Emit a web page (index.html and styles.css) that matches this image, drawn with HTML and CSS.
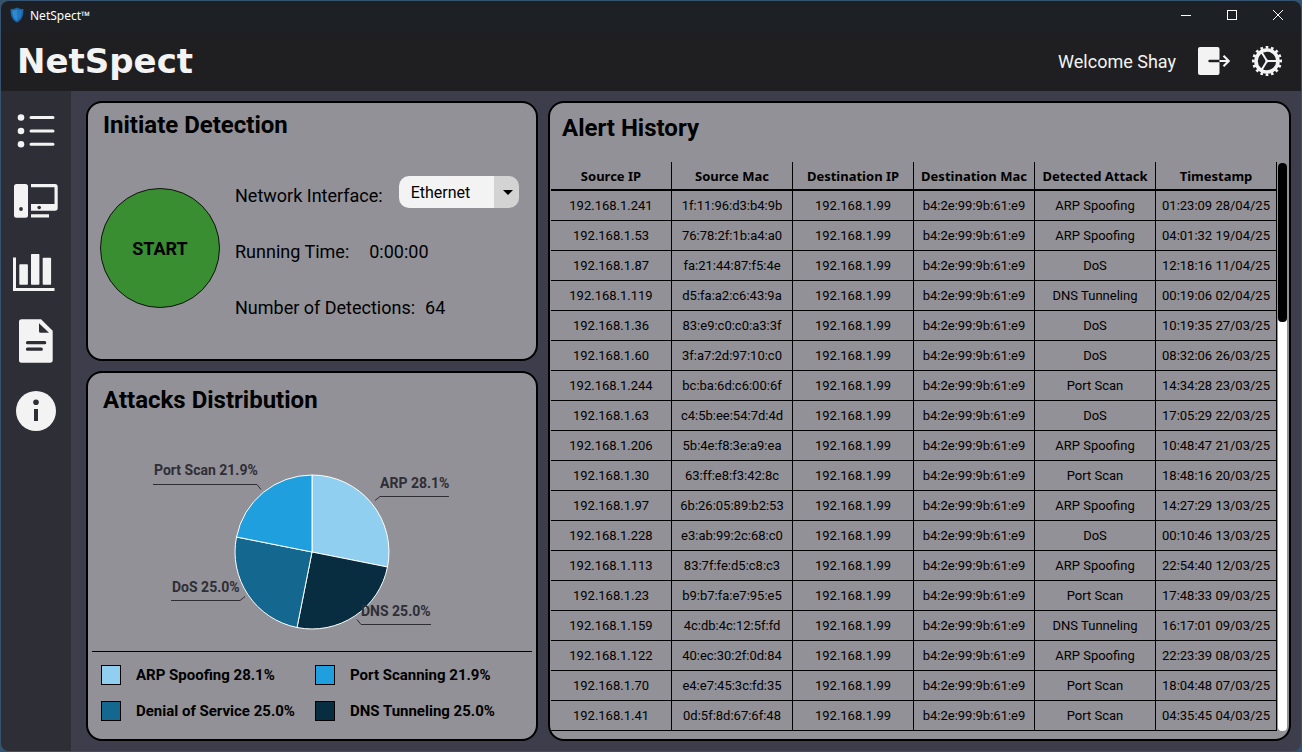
FILE: index.html
```html
<!DOCTYPE html>
<html lang="en">
<head>
<meta charset="utf-8">
<meta name="viewport" content="width=device-width, initial-scale=1">
<title>NetSpect™</title>
<link rel="stylesheet" href="styles.css">
</head>
<body>
<div class="window">
  <div class="titlebar">
    <svg class="titlebar-logo" viewBox="0 0 14 16" width="14" height="16" aria-hidden="true"><path d="M7 .5C5 1.6 3 2 .6 2c-.3 6 1.200 11 6.400 13.600C12.200 13 13.700 8 13.400 2 11 2 9 1.600 7 .5z" fill="#1766ad"/><path d="M7 2.400C5.400 3.200 3.900 3.500 2.200 3.600c0 4.400 1.200 8 4.800 10.200z" fill="#2f8ad0"/><path d="M7 2.400c1.600.8 3.100 1.100 4.800 1.200 0 4.400-1.200 8-4.800 10.200z" fill="#2478c0"/></svg>
    <span class="titlebar-name">NetSpect™</span>
    <div class="window-controls">
      <button class="window-button" aria-label="Minimize"><svg viewBox="0 0 10 10" width="10" height="10"><path d="M0 5.500h10" stroke="#fff"/></svg></button>
      <button class="window-button" aria-label="Maximize"><svg viewBox="0 0 10 10" width="10" height="10"><rect x=".5" y=".5" width="9" height="9" fill="none" stroke="#fff"/></svg></button>
      <button class="window-button" aria-label="Close"><svg viewBox="0 0 10 10" width="10" height="10"><path d="M0 0l10 10M10 0L0 10" stroke="#fff"/></svg></button>
    </div>
  </div>

  <header class="header">
    <h1 class="brand">NetSpect</h1>
    <div class="account">
      <span class="welcome">Welcome Shay</span>
      <button class="icon-button" aria-label="Log out">
        <svg viewBox="0 0 32 30" width="32" height="30"><rect x="0" y="1" width="21.500" height="28" rx="2" fill="#f3f3f3"/><path d="M11.500 15H22" stroke="#1f1f21" stroke-width="2.400" stroke-linecap="round"/><path d="M21.500 15H30M25.500 9.800l5.300 5.200-5.300 5.200" fill="none" stroke="#f3f3f3" stroke-width="2.200"/></svg>
      </button>
      <button class="icon-button" aria-label="Settings">
        <svg viewBox="0 0 30 30" width="30" height="30" fill="none" stroke="#f3f3f3"><circle cx="15" cy="15" r="11" stroke-width="3.600"/><circle cx="15" cy="15" r="13.600" stroke-width="2.800" pathLength="96" stroke-dasharray="3 3" stroke-dashoffset="1.500"/><path d="M15 15h10M15 15l-5.500-9M15 15l-5.500 9" stroke-width="2"/><circle cx="15" cy="15" r="1.600" fill="#f3f3f3" stroke="none"/></svg>
      </button>
    </div>
  </header>

  <div class="workspace">
    <nav class="sidebar" aria-label="Main">
      <a class="nav-link" href="#dashboard" aria-label="Dashboard"><svg viewBox="0 0 48 48" width="48" height="48" fill="#f3f3f3"><circle cx="9" cy="10.500" r="3.300"/><circle cx="9" cy="24" r="3.300"/><circle cx="9" cy="37.300" r="3.300"/><path d="M19 10.500h22M19 24h22M19 37.300h22" stroke="#f3f3f3" stroke-width="3" stroke-linecap="round"/></svg></a>
      <a class="nav-link" href="#devices" aria-label="Devices"><svg viewBox="0 0 48 48" width="48" height="48" fill="#f3f3f3"><rect x="2" y="7" width="14" height="33.700" rx="2.500"/><circle cx="9" cy="32" r="1.900" fill="#2e2e36"/><path d="M19 7h24a2.700 2.700 0 0 1 2.700 2.700v21.300a2.700 2.700 0 0 1-2.700 2.700H19V27h23.500V10.200H19z"/><circle cx="27.200" cy="30.500" r="1.800" fill="#2e2e36"/><path d="M19 37.200h18v3.400H19z"/></svg></a>
      <a class="nav-link" href="#statistics" aria-label="Statistics"><svg viewBox="0 0 48 48" width="48" height="48" fill="#f3f3f3"><path d="M1 10.500h3V41h38.500v3H1z"/><rect x="7.300" y="17.300" width="8.600" height="20.500" rx=".8"/><rect x="19" y="7" width="8.400" height="30.800" rx=".8"/><rect x="30.700" y="10.700" width="8.400" height="27.100" rx=".8"/></svg></a>
      <a class="nav-link" href="#report" aria-label="Report"><svg viewBox="0 0 48 48" width="48" height="48"><path d="M9.500 2.200H29l11.700 11.500V43a2.700 2.700 0 0 1-2.700 2.700H9.500A2.500 2.500 0 0 1 7 43V4.700a2.500 2.500 0 0 1 2.500-2.500z" fill="#f3f3f3"/><path d="M27 6.300l10 9.500h-8.500a1.500 1.500 0 0 1-1.500-1.500z" fill="#2e2e36"/><path d="M15.500 25.700h17.200M15.500 32.200h13.800" stroke="#2e2e36" stroke-width="3.200" stroke-linecap="round"/></svg></a>
      <a class="nav-link" href="#about" aria-label="About"><svg viewBox="0 0 48 48" width="48" height="48"><circle cx="24" cy="24" r="20" fill="#f3f3f3"/><circle cx="24" cy="15.300" r="2.800" fill="#2e2e36"/><path d="M22 22h4v12h-4z" fill="#2e2e36"/></svg></a>
    </nav>

    <main class="main">
      <section class="panel detection">
        <h2 class="panel-title">Initiate Detection</h2>
        <div class="detection-body">
          <button class="start-button">START</button>
          <div class="detection-info">
            <div class="info-row">
              <label for="interface">Network Interface:</label>
              <div class="select-box">
                <select class="select" id="interface"><option>Ethernet</option></select>
                <svg class="select-arrow" viewBox="0 0 10 5" width="10" height="5" aria-hidden="true"><path d="M0 0h10L5 5z"/></svg>
              </div>
            </div>
            <div class="info-row info-row-time"><span>Running Time:</span><span>0:00:00</span></div>
            <div class="info-row info-row-count"><span>Number of Detections:</span><span>64</span></div>
          </div>
        </div>
      </section>

      <section class="panel distribution">
        <h2 class="panel-title">Attacks Distribution</h2>
        <svg class="pie" viewBox="0 0 320 175" width="320" height="175" role="img" aria-label="Attacks distribution pie chart">
          <g stroke="#fff" stroke-width="1">
            <path d="M160 92V15A77 77 0 0 1 235.500 107z" fill="#90cff0"/>
            <path d="M160 92l75.500 15A77 77 0 0 1 145 167.500z" fill="#082d40"/>
            <path d="M160 92l-15 75.500A77 77 0 0 1 84.500 77z" fill="#14678f"/>
            <path d="M160 92L84.500 77A77 77 0 0 1 160 15z" fill="#209fdf"/>
          </g>
          <g class="pie-leader">
            <path d="M1 24.500h104l4 5"/><path d="M223 40.500l5-4h69"/><path d="M19 140.500h69l5-4"/><path d="M205 159.500l4 5h70"/>
          </g>
          <g class="pie-label">
            <text x="2" y="15">Port Scan 21.9%</text><text x="228" y="28">ARP 28.1%</text><text x="20" y="132">DoS 25.0%</text><text x="209" y="156">DNS 25.0%</text>
          </g>
        </svg>
        <ul class="legend">
          <li class="legend-item"><span class="swatch swatch-arp"></span>ARP Spoofing 28.1%</li>
          <li class="legend-item"><span class="swatch swatch-port"></span>Port Scanning 21.9%</li>
          <li class="legend-item"><span class="swatch swatch-dos"></span>Denial of Service 25.0%</li>
          <li class="legend-item"><span class="swatch swatch-dns"></span>DNS Tunneling 25.0%</li>
        </ul>
      </section>

      <section class="panel history">
        <h2 class="panel-title">Alert History</h2>
        <div class="history-body">
          <table class="alerts">
            <thead><tr><th>Source IP</th><th>Source Mac</th><th>Destination IP</th><th>Destination Mac</th><th>Detected Attack</th><th>Timestamp</th></tr></thead>
            <tbody>
              <tr><td>192.168.1.241</td><td>1f:11:96:d3:b4:9b</td><td>192.168.1.99</td><td>b4:2e:99:9b:61:e9</td><td>ARP Spoofing</td><td>01:23:09 28/04/25</td></tr>
              <tr><td>192.168.1.53</td><td>76:78:2f:1b:a4:a0</td><td>192.168.1.99</td><td>b4:2e:99:9b:61:e9</td><td>ARP Spoofing</td><td>04:01:32 19/04/25</td></tr>
              <tr><td>192.168.1.87</td><td>fa:21:44:87:f5:4e</td><td>192.168.1.99</td><td>b4:2e:99:9b:61:e9</td><td>DoS</td><td>12:18:16 11/04/25</td></tr>
              <tr><td>192.168.1.119</td><td>d5:fa:a2:c6:43:9a</td><td>192.168.1.99</td><td>b4:2e:99:9b:61:e9</td><td>DNS Tunneling</td><td>00:19:06 02/04/25</td></tr>
              <tr><td>192.168.1.36</td><td>83:e9:c0:c0:a3:3f</td><td>192.168.1.99</td><td>b4:2e:99:9b:61:e9</td><td>DoS</td><td>10:19:35 27/03/25</td></tr>
              <tr><td>192.168.1.60</td><td>3f:a7:2d:97:10:c0</td><td>192.168.1.99</td><td>b4:2e:99:9b:61:e9</td><td>DoS</td><td>08:32:06 26/03/25</td></tr>
              <tr><td>192.168.1.244</td><td>bc:ba:6d:c6:00:6f</td><td>192.168.1.99</td><td>b4:2e:99:9b:61:e9</td><td>Port Scan</td><td>14:34:28 23/03/25</td></tr>
              <tr><td>192.168.1.63</td><td>c4:5b:ee:54:7d:4d</td><td>192.168.1.99</td><td>b4:2e:99:9b:61:e9</td><td>DoS</td><td>17:05:29 22/03/25</td></tr>
              <tr><td>192.168.1.206</td><td>5b:4e:f8:3e:a9:ea</td><td>192.168.1.99</td><td>b4:2e:99:9b:61:e9</td><td>ARP Spoofing</td><td>10:48:47 21/03/25</td></tr>
              <tr><td>192.168.1.30</td><td>63:ff:e8:f3:42:8c</td><td>192.168.1.99</td><td>b4:2e:99:9b:61:e9</td><td>Port Scan</td><td>18:48:16 20/03/25</td></tr>
              <tr><td>192.168.1.97</td><td>6b:26:05:89:b2:53</td><td>192.168.1.99</td><td>b4:2e:99:9b:61:e9</td><td>ARP Spoofing</td><td>14:27:29 13/03/25</td></tr>
              <tr><td>192.168.1.228</td><td>e3:ab:99:2c:68:c0</td><td>192.168.1.99</td><td>b4:2e:99:9b:61:e9</td><td>DoS</td><td>00:10:46 13/03/25</td></tr>
              <tr><td>192.168.1.113</td><td>83:7f:fe:d5:c8:c3</td><td>192.168.1.99</td><td>b4:2e:99:9b:61:e9</td><td>ARP Spoofing</td><td>22:54:40 12/03/25</td></tr>
              <tr><td>192.168.1.23</td><td>b9:b7:fa:e7:95:e5</td><td>192.168.1.99</td><td>b4:2e:99:9b:61:e9</td><td>Port Scan</td><td>17:48:33 09/03/25</td></tr>
              <tr><td>192.168.1.159</td><td>4c:db:4c:12:5f:fd</td><td>192.168.1.99</td><td>b4:2e:99:9b:61:e9</td><td>DNS Tunneling</td><td>16:17:01 09/03/25</td></tr>
              <tr><td>192.168.1.122</td><td>40:ec:30:2f:0d:84</td><td>192.168.1.99</td><td>b4:2e:99:9b:61:e9</td><td>ARP Spoofing</td><td>22:23:39 08/03/25</td></tr>
              <tr><td>192.168.1.70</td><td>e4:e7:45:3c:fd:35</td><td>192.168.1.99</td><td>b4:2e:99:9b:61:e9</td><td>Port Scan</td><td>18:04:48 07/03/25</td></tr>
              <tr><td>192.168.1.41</td><td>0d:5f:8d:67:6f:48</td><td>192.168.1.99</td><td>b4:2e:99:9b:61:e9</td><td>Port Scan</td><td>04:35:45 04/03/25</td></tr>
            </tbody>
          </table>
          <div class="scrollbar"><div class="scrollbar-thumb"></div></div>
        </div>
      </section>
    </main>
  </div>
</div>
</body>
</html>
```

FILE: styles.css
```css
* {
  box-sizing: border-box;
}

body {
  margin: 0;
  min-height: 100vh;
  display: flex;
  padding: 1px;
  background: #35536f;
  color: #000;
  font-family: Roboto, "Liberation Sans", sans-serif;
}

button {
  border: 0;
  padding: 0;
  background: none;
  font: inherit;
  color: inherit;
}

svg {
  display: block;
  flex: none;
}

.window {
  flex: 1;
  display: flex;
  flex-direction: column;
  min-width: 0;
  overflow: hidden;
  border-radius: 8px;
  background: #3d3d4b;
}

.titlebar {
  display: flex;
  align-items: center;
  height: 30px;
  padding: 0 0 2px 9px;
  gap: 6px;
  background: #1d2125;
  color: #fff;
  font-family: "Noto Sans", sans-serif;
  font-size: 12px;
}

.window-controls {
  display: flex;
  margin-left: auto;
}

.window-button {
  display: flex;
  align-items: center;
  justify-content: center;
  width: 46px;
  height: 28px;
}

.header {
  display: flex;
  align-items: center;
  justify-content: space-between;
  height: 60px;
  padding: 0 19px 0 16px;
  background: #1f1f21;
  color: #f3f3f3;
}

.brand {
  margin: 0;
  font: bold 34px/40px "DejaVu Sans", sans-serif;
}

.account {
  display: flex;
  align-items: center;
  gap: 22px;
  font-size: 18px;
}

.workspace {
  flex: 1;
  display: flex;
}

.sidebar {
  flex: none;
  width: 70px;
  padding-top: 5px;
  background: #2e2e36;
}

.nav-link {
  display: flex;
  align-items: center;
  justify-content: center;
  height: 70px;
}

.main {
  flex: 1;
  display: grid;
  grid-template-columns: 452fr 743fr;
  grid-template-rows: auto 1fr;
  gap: 10px;
  min-width: 0;
  padding: 10px 10px 10px 15px;
}

.panel {
  display: flex;
  flex-direction: column;
  min-width: 0;
  overflow: hidden;
  border: 2px solid #000;
  border-radius: 16px;
  background: #929197;
}

.panel-title {
  margin: 0;
  padding: 6px 15px;
  font-size: 24px;
  line-height: 32px;
}

.detection-body {
  display: flex;
  align-items: center;
  gap: 15px;
  padding: 14px 12px 24px;
}

.start-button {
  flex: none;
  width: 120px;
  height: 120px;
  border: 1px solid #111;
  border-radius: 50%;
  background: #388e30;
  font-size: 18px;
  font-weight: bold;
}

.detection-info {
  padding-top: 6px;
  font-size: 18px;
  white-space: nowrap;
}

.info-row {
  display: flex;
  align-items: center;
  gap: 16px;
  height: 56px;
}

.info-row-time {
  gap: 20px;
}

.info-row-count {
  gap: 10px;
}

.select-box {
  position: relative;
  padding-bottom: 6px;
}

.select {
  display: block;
  width: 120px;
  height: 32px;
  padding: 0 12px;
  appearance: none;
  border: 0;
  border-radius: 10px;
  background: linear-gradient(to right, #f3f3f3 95px, #d3d3d3 95px);
  color: #000;
  font: 16px Roboto, sans-serif;
}

.select-arrow {
  position: absolute;
  top: 14px;
  right: 6px;
  pointer-events: none;
}

.distribution .panel-title {
  padding-top: 11px;
}

.pie {
  margin: auto;
}

.pie-leader {
  fill: none;
  stroke: #2e2e36;
}

.pie-label {
  fill: #2e2e36;
  font-size: 14px;
  font-weight: bold;
}

.distribution .pie {
  margin-bottom: 16px;
}

.legend {
  display: grid;
  grid-template-columns: 1fr 1fr;
  gap: 16px 0;
  margin: 0 4px;
  padding: 13px 3px 18px 9px;
  border-top: 1px solid #000;
  list-style: none;
  font-size: 15px;
  font-weight: bold;
}

.legend-item {
  display: flex;
  align-items: center;
  gap: 15px;
  line-height: 20px;
  white-space: nowrap;
}

.swatch {
  width: 20px;
  height: 20px;
  border: 1px solid #000;
}

.swatch-arp { background: #90cff0; }
.swatch-port { background: #209fdf; }
.swatch-dos { background: #14678f; }
.swatch-dns { background: #082d40; }

.history {
  grid-column: 2;
  grid-row: 1 / 3;
}

.history .panel-title {
  padding: 9px 12px 18px;
}

.history-body {
  display: flex;
  padding: 0 2px 8px 1px;
}

.alerts {
  flex: 1;
  width: 100%;
  table-layout: fixed;
  border-collapse: separate;
  border-spacing: 0;
  font-size: 13px;
  text-align: center;
}

.alerts th,
.alerts td {
  height: 30px;
  padding: 0;
  border-right: 1px solid #000;
  border-bottom: 1px solid #000;
  white-space: nowrap;
}

.alerts th {
  height: 29px;
  border-bottom-width: 2px;
  font-family: "Noto Sans", sans-serif;
}

.scrollbar {
  flex: none;
  width: 9px;
  margin: 1px 0 0 1px;
  border-radius: 4px;
  background: #fff;
}

.scrollbar-thumb {
  height: 28%;
  border-radius: 4px;
  background: #000;
}
```
